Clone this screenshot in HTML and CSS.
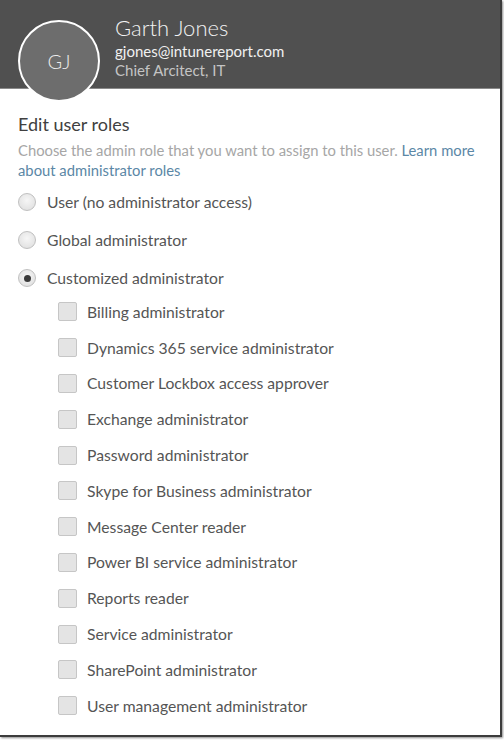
FILE: index.html
```html
<!DOCTYPE html>
<html>
<head>
<meta charset="utf-8">
<link rel="stylesheet" href="styles.css">
</head>
<body>
<div class="frame">
  <header class="header">
    <div class="avatar">GJ</div>
    <div class="ident">
      <div class="name">Garth Jones</div>
      <div class="email">gjones@intunereport.com</div>
      <div class="title">Chief Arcitect, IT</div>
    </div>
  </header>
  <main class="content">
    <h1 class="heading">Edit user roles</h1>
    <p class="desc">Choose the admin role that you want to assign to this user. <span class="link">Learn more about administrator roles</span></p>
    <div class="radios">
      <div class="radio-row"><span class="radio"></span><span>User (no administrator access)</span></div>
      <div class="radio-row"><span class="radio"></span><span>Global administrator</span></div>
      <div class="radio-row"><span class="radio checked"></span><span>Customized administrator</span></div>
    </div>
    <div class="checks">
      <div class="check-row"><span class="box"></span><span>Billing administrator</span></div>
      <div class="check-row"><span class="box"></span><span>Dynamics 365 service administrator</span></div>
      <div class="check-row"><span class="box"></span><span>Customer Lockbox access approver</span></div>
      <div class="check-row"><span class="box"></span><span>Exchange administrator</span></div>
      <div class="check-row"><span class="box"></span><span>Password administrator</span></div>
      <div class="check-row"><span class="box"></span><span>Skype for Business administrator</span></div>
      <div class="check-row"><span class="box"></span><span>Message Center reader</span></div>
      <div class="check-row"><span class="box"></span><span>Power BI service administrator</span></div>
      <div class="check-row"><span class="box"></span><span>Reports reader</span></div>
      <div class="check-row"><span class="box"></span><span>Service administrator</span></div>
      <div class="check-row"><span class="box"></span><span>SharePoint administrator</span></div>
      <div class="check-row"><span class="box"></span><span>User management administrator</span></div>
    </div>
  </main>
</div>
</body>
</html>
```
FILE: styles.css
```css
html, body {
  margin: 0;
  padding: 0;
  background: #ffffff;
}
body {
  font-family: Lato, "Open Sans", sans-serif;
  color: #555555;
  width: 504px;
  height: 740px;
  overflow: hidden;
}
.frame {
  width: 500px;
  height: 735px;
  border-right: 2px solid #3c3c3c;
  border-bottom: 2px solid #3c3c3c;
  box-shadow: 1px 1px 2px rgba(0,0,0,0.45);
  background: #fff;
}
.header {
  height: 89px;
  background: #505050;
  border-bottom: 1px solid #8a8a8a;
  display: flex;
  align-items: flex-start;
  padding-left: 18px;
  box-sizing: border-box;
}
.avatar {
  flex: none;
  width: 78px;
  height: 78px;
  margin-top: 20px;
  border-radius: 50%;
  border: 2px solid #ffffff;
  background: #6d6d6d;
  color: #ececec;
  display: flex;
  align-items: center;
  justify-content: center;
  font-size: 20px;
  font-weight: 300;
  position: relative;
  z-index: 2;
}
.ident {
  margin-left: 15px;
  padding-top: 15px;
}
.name {
  font-size: 22px;
  line-height: 26px;
  color: #f2f2f2;
  font-weight: 300;
}
.email {
  font-size: 15px;
  line-height: 19px;
  color: #f0f0f0;
  margin-top: 1px;
}
.title {
  font-size: 15px;
  line-height: 19px;
  color: #c4c4c4;
}
.content {
  padding: 23px 0 0 18px;
}
.heading {
  margin: 0;
  font-size: 18px;
  font-weight: 400;
  line-height: 24px;
  color: #404040;
}
.desc {
  margin: 4px 0 0 0;
  font-size: 14.8px;
  line-height: 20px;
  color: #a6a6a6;
  width: 470px;
}
.link {
  color: #5b87a6;
}
.radios {
  margin-top: 3px;
}
.radio-row {
  display: flex;
  align-items: center;
  height: 38px;
  font-size: 15.7px;
}
.radio {
  flex: none;
  width: 18px;
  height: 18px;
  border-radius: 50%;
  border: 1px solid #c0c0c0;
  background: radial-gradient(circle at 50% 40%, #f6f6f6 0%, #e4e4e4 70%, #d6d6d6 100%);
  margin-right: 11px;
  box-sizing: border-box;
  position: relative;
}
.radio.checked::after {
  content: "";
  position: absolute;
  left: 4.5px;
  top: 4.5px;
  width: 7px;
  height: 7px;
  border-radius: 50%;
  background: #3a3a3a;
}
.checks {
  padding-left: 40px;
  margin-top: -3px;
}
.check-row {
  display: flex;
  align-items: center;
  height: 35.8px;
  font-size: 15.7px;
}
.box {
  flex: none;
  width: 19px;
  height: 19px;
  border: 1px solid #c6c6c6;
  border-radius: 2px;
  background: #e4e4e4;
  box-sizing: border-box;
  margin-right: 10px;
}
```
